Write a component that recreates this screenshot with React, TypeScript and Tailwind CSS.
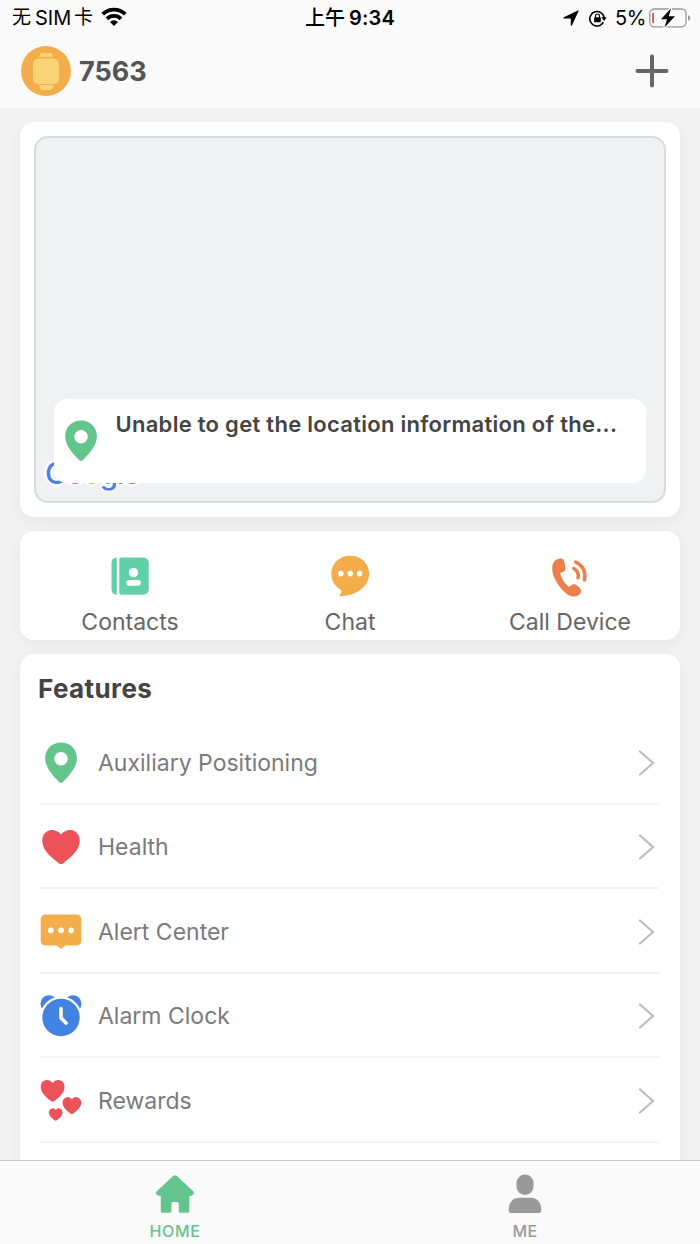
import type { ReactNode } from 'react';

function WatchAvatar() {
  return (
    <svg className="w-[50px] h-[50px]" viewBox="0 0 50 50">
      <circle cx="25" cy="25" r="25" fill="#f3ae4b" />
      <path d="M20.5 7h9q1 0 1.500 1l1.500 3h-14.500l1.500-3q.500-1 1-1z" fill="#f8d477" />
      <path d="M20.500 44h9q1 0 1.500-1l1.500-4h-14.500l1.500 4q.500 1 1 1z" fill="#f8d477" />
      <rect x="12" y="12.500" width="26" height="25.500" rx="5.500" fill="#f8d477" />
    </svg>
  );
}

function WifiIcon() {
  return (
    <svg className="w-[26px] h-[19px]" viewBox="0 0 26 19">
      <g fill="none" stroke="#000" strokeWidth="3.800">
        <path d="M1.700 7.200a16 16 0 0 1 22.600 0" />
        <path d="M6 11.800a9.900 9.900 0 0 1 14 0" />
      </g>
      <path d="M9 14.900a5.700 5.700 0 0 1 8 0L13 18.900z" fill="#000" />
    </svg>
  );
}

function LocationArrow() {
  return (
    <svg className="w-[16px] h-[16px]" viewBox="0 0 16 16">
      <path d="M15 .4Q16 .2 15.500 1.300L9 15.200q-.9 1.300-1.200-.2V8.500H1Q-.5 8.100 .8 7.200z" />
    </svg>
  );
}

function RotationLock() {
  return (
    <svg className="w-[18px] h-[17px]" viewBox="0 0 18 17">
      <path d="M12 14.800A7.200 7.200 0 1 1 15.200 8" fill="none" stroke="#000" strokeWidth="1.600" />
      <path d="M12.300 7.300h5.500l-2.700 3.600z" />
      <path d="M14.300 12.200a7 7 0 0 1-2.500 2.600" fill="none" stroke="#000" strokeWidth="1.600" />
      <rect x="5.200" y="7.200" width="6.600" height="5" rx=".8" />
      <path d="M6.500 7.500V6a2 2 0 0 1 4 0v1.500" fill="none" stroke="#000" strokeWidth="1.200" />
    </svg>
  );
}

function Battery() {
  return (
    <svg className="w-[42px] h-[20px]" viewBox="0 0 42 20">
      <rect x=".8" y="1" width="36.200" height="17.800" rx="4.500" fill="none" stroke="#999" strokeWidth="1.300" />
      <path d="M39 7q2.300 1 2.300 3T39 13z" fill="#999" />
      <rect x="3.200" y="4.800" width="1.800" height="10.500" rx=".8" fill="#ec4b40" />
      <path d="M22 .2L12 11.200h6L15.500 19.500 26 8.300h-6.200z" fill="#000" stroke="#fafafa" strokeWidth="2.500" paintOrder="stroke" strokeLinejoin="round" />
    </svg>
  );
}

function PinIcon() {
  return (
    <svg className="w-[42px] h-[42px]" viewBox="0 0 42 42">
      <path
        fillRule="evenodd"
        d="M21 .6C12 .6 5.200 7.300 5.200 16.500c0 7.500 5.300 14.700 13.800 23.600q2 1.700 4 0C31.500 31.200 36.900 24 36.900 16.500 36.900 7.300 30 .6 21 .6zm0 9.400a6.800 6.800 0 1 1 0 13.600 6.800 6.800 0 0 1 0-13.600z"
        fill="#63c48c"
      />
    </svg>
  );
}

const HEART = 'M19 5C15.500 1 11.800.2 9.600.5 4 1 .3 5.200.3 11.200c0 10 9.200 16.500 16.700 22.700q2 1.300 4 0C28.500 27.700 37.700 21.200 37.700 11.200 37.700 5.200 34 1 28.400.5 26.200.2 22.500 1 19 5z';

function HeartIcon() {
  return (
    <svg className="w-[42px] h-[42px]" viewBox="0 0 42 42">
      <path transform="translate(2 3.500)" d={HEART} fill="#ec525a" />
    </svg>
  );
}

function HeartsIcon() {
  return (
    <svg className="w-[42px] h-[42px]" viewBox="0 0 42 42" fill="#ec525a">
      <path transform="translate(.6 -.2) scale(.635)" d={HEART} />
      <path transform="translate(22.400 16.900) scale(.5)" d={HEART} />
      <path transform="translate(8.800 28.200) scale(.365)" d={HEART} />
    </svg>
  );
}

function AlertIcon() {
  return (
    <svg className="w-[42px] h-[42px]" viewBox="0 0 42 42">
      <path d="M6 3.500h30q5.300 0 5.300 5.300v20.400q0 5.300-5.300 5.300H25.500l-3.200 2.600q-1.300 1-2.600 0L16.500 34.500H6Q.7 34.500.7 29.200V8.800Q.7 3.500 6 3.500z" fill="#f3ae4b" />
      <g fill="#fff">
        <circle cx="10.800" cy="19.400" r="2.800" />
        <circle cx="21" cy="19.400" r="2.800" />
        <circle cx="31.200" cy="19.400" r="2.800" />
      </g>
    </svg>
  );
}

function AlarmIcon() {
  return (
    <svg className="w-[42px] h-[42px]" viewBox="0 0 42 42">
      <circle cx="9" cy="8.800" r="8.500" fill="#4282e0" />
      <circle cx="33" cy="8.800" r="8.500" fill="#4282e0" />
      <circle cx="21" cy="22.500" r="21" fill="#fff" />
      <circle cx="21" cy="22.500" r="18.700" fill="#4282e0" />
      <path d="M21 13.500v9.500l5 5" fill="none" stroke="#fff" strokeWidth="3.600" strokeLinecap="round" strokeLinejoin="round" />
    </svg>
  );
}

function ContactsIcon() {
  return (
    <svg className="w-[42px] h-[42px]" viewBox="0 0 42 42">
      <path d="M7.800 2.500v37.200Q2.500 39.500 2.500 34V8q0-5.300 5.300-5.500z" fill="#62d0a6" />
      <path d="M12.500 2.500H34q5.700 0 5.700 5.700V34q0 5.700-5.700 5.700H12.500q-2.300 0-2.300-2.300V4.800q0-2.300 2.300-2.300z" fill="#62d0a6" />
      <circle cx="24.500" cy="17.600" r="4.700" fill="#fff" />
      <rect x="17.200" y="25" width="14.700" height="5.700" rx="2.850" fill="#fff" />
    </svg>
  );
}

function ChatIcon() {
  return (
    <svg className="w-[42px] h-[42px]" viewBox="0 0 42 42">
      <path d="M21.300.8c10.700 0 18.800 7.500 18.800 17.800C40.100 31.500 28 40.500 11.500 41.300q-1.600-.2-.7-1.600 2.800-3.500 1-4.700C5.500 30.800 2.300 26 2.300 18.600 2.300 8.300 10.600.8 21.300.8z" fill="#f3ae4b" />
      <g fill="#fff">
        <circle cx="11.800" cy="18.600" r="2.800" />
        <circle cx="21.200" cy="18.600" r="2.800" />
        <circle cx="30.600" cy="18.600" r="2.800" />
      </g>
    </svg>
  );
}

function PhoneIcon() {
  return (
    <svg className="w-[42px] h-[42px]" viewBox="0 0 42 42">
      <path
        d="M7.600 4.600C10.500 3.200 13.800 3 14.900 5.500c1 2.500 1.600 6.500 1.300 9-.5 3-4.300 2.200-5.100 4C12.500 23 15.300 28 19.300 31.500c1.700 1.500 3.500-3.100 6.200-2.300 2.700.9 5.500 3.300 6.300 5.500 1 2.500-.6 4.500-3.200 6-3.500 1.600-8 .9-12.800-3.500C9 31 3.500 21.500 3.200 14.500 3 9.500 4.500 6.200 7.600 4.600z"
        fill="#ee7f4d"
      />
      <g fill="none" stroke="#ee7f4d" strokeWidth="3.500" strokeLinecap="round">
        <path d="M24.800 13.500q5.700 3.500 4.200 9.300" />
        <path d="M26.600 7q11.300 5.500 8.900 18" />
      </g>
    </svg>
  );
}

function HomeIcon() {
  return (
    <svg className="w-[40px] h-[40px]" viewBox="0 0 40 40">
      <path d="M18.500 1.800q1.500-1.300 3 0L38 17q1.800 2.200 0 3.800-1.500 1.200-3.700 1.200v15.200q0 1.500-1.500 1.500h-7.500q-1.500 0-1.500-1.500V29.500q0-1.500-1.500-1.500h-4.400q-1.500 0-1.500 1.500v7.700q0 1.500-1.500 1.500H7.300q-1.500 0-1.500-1.500V22Q3.500 22 2 20.800 0 19 2 17z" fill="#63c48c" />
    </svg>
  );
}

function PersonIcon() {
  return (
    <svg className="w-[40px] h-[40px]" viewBox="0 0 40 40" fill="#999">
      <rect x="11.500" y=".6" width="17" height="20.500" rx="8.500" />
      <path d="M14.500 23.700h11c6.500 0 10.800 4.500 10.800 12.500q0 2.800-2.800 2.800h-27q-2.800 0-2.800-2.800c0-8 4.300-12.500 10.800-12.500z" />
    </svg>
  );
}

const actions: { label: string; icon: ReactNode }[] = [
  { label: 'Contacts', icon: <ContactsIcon /> },
  { label: 'Chat', icon: <ChatIcon /> },
  { label: 'Call Device', icon: <PhoneIcon /> },
];

const features: { label: string; icon: ReactNode }[] = [
  { label: 'Auxiliary Positioning', icon: <PinIcon /> },
  { label: 'Health', icon: <HeartIcon /> },
  { label: 'Alert Center', icon: <AlertIcon /> },
  { label: 'Alarm Clock', icon: <AlarmIcon /> },
  { label: 'Rewards', icon: <HeartsIcon /> },
];

export default function App() {
  return (
    <div className="flex h-[1244px] w-[700px] flex-col overflow-hidden bg-[#f2f2f2] font-[Inter,'Noto_Sans_CJK_SC',sans-serif]">
      <header className="h-[108px] shrink-0 bg-[#fafafa]">
        <div className="grid h-9 grid-cols-3 items-center pl-3 pr-[9px] text-[20px] leading-9 text-black">
          <div className="flex items-center">
            <span className="w-[23px] text-[19px]">无</span>
            <span className="w-[39px]">SIM</span>
            <span className="w-[28px] text-[19px]">卡</span>
            <div className="-mt-1 -ml-px"><WifiIcon /></div>
          </div>
          <div className="flex items-center justify-center gap-[4px] pr-[3px] font-medium">
            <span className="text-[20px]">上午</span>
            <span className="font-semibold tracking-[0.2px]">9:34</span>
          </div>
          <div className="flex items-center justify-end">
            <LocationArrow />
            <div className="ml-[10px] mr-[8px]"><RotationLock /></div>
            <span className="w-[34px] tracking-tight">5%</span>
            <div className="-mt-px"><Battery /></div>
          </div>
        </div>
        <div className="flex h-[70px] items-center pl-[21px] pr-[31px]">
          <WatchAvatar />
          <span className="ml-2 mt-[2px] text-[27px] font-bold text-[#555]">7563</span>
          <svg className="ml-auto h-[34px] w-[34px]" viewBox="0 0 34 34">
            <path d="M17 2.500v29M2.500 17h29" stroke="#666" strokeWidth="4" strokeLinecap="round" />
          </svg>
        </div>
      </header>

      <main className="flex min-h-0 flex-1 flex-col gap-[14px] overflow-hidden px-5 pt-[14px]">
        <section className="h-[395px] shrink-0 rounded-[14px] bg-white px-[14px] pt-[14px] shadow-[0_4px_14px_rgba(0,0,0,0.05)]">
          <div className="relative flex h-[367px] flex-col justify-end overflow-hidden rounded-[14px] border-2 border-[#dadbdc] bg-[#f0f1f3] px-[18px] pb-[18px]">
            <div className="absolute bottom-[9px] left-[9px] text-[30px] font-medium leading-[38px] tracking-[-1.4px] [text-shadow:0_0_2px_#fff,2px_0_2px_#fff,-2px_0_2px_#fff,0_2px_2px_#fff,0_-2px_2px_#fff]">
              <span className="text-[#4a80ee]">G</span>
              <span className="text-[#dc6459]">o</span>
              <span className="text-[#eebd42]">o</span>
              <span className="text-[#4a80ee]">g</span>
              <span className="text-[#58a764]">l</span>
              <span className="text-[#dc6459]">e</span>
            </div>
            <div className="relative flex h-[84px] items-center rounded-[13px] bg-white pl-[6px]">
              <PinIcon />
              <p className="mb-[34px] ml-[13.5px] whitespace-nowrap text-[22px] font-semibold leading-[30px] tracking-[0.28px] text-[#444]">
                Unable to get the location information of the...
              </p>
            </div>
          </div>
        </section>

        <section className="grid h-[109px] shrink-0 grid-cols-3 rounded-[14px] bg-white shadow-[0_4px_14px_rgba(0,0,0,0.05)]">
          {actions.map((a) => (
            <div key={a.label} className="flex flex-col items-center pt-6">
              {a.icon}
              <span className="mt-[9px] text-[23px] leading-8 text-[#666]">{a.label}</span>
            </div>
          ))}
        </section>

        <section className="h-[520px] shrink-0 rounded-t-[14px] bg-white px-[18px] shadow-[0_4px_14px_rgba(0,0,0,0.05)]">
          <h2 className="flex h-[66px] items-center pt-[2px] text-[26px] font-bold tracking-[0.4px] text-[#444]">Features</h2>
          <ul>
            {features.map((f) => (
              <li key={f.label} className="ml-[2px] mr-[3px] flex h-[84.5px] items-center border-b-2 border-[#f4f4f4] pt-[3px]">
                {f.icon}
                <span className="ml-[16px] text-[23px] text-[#7a7a7a]">{f.label}</span>
                <svg className="ml-auto mr-[4px] h-[26px] w-[17px]" viewBox="0 0 17 26">
                  <path d="M2 1.500L15 13 2 24.500" fill="none" stroke="#bdbdbd" strokeWidth="2.200" strokeLinecap="round" />
                </svg>
              </li>
            ))}
          </ul>
        </section>
      </main>

      <nav className="grid h-[84px] shrink-0 grid-cols-2 border-t border-[#c9c9c9] bg-[#fafafa] text-[16px] leading-5">
        <div className="flex flex-col items-center pt-[13px] text-[#63c48c]">
          <HomeIcon />
          <span className="mt-[7px] font-medium tracking-[0.6px]">HOME</span>
        </div>
        <div className="flex flex-col items-center pt-[13px] text-[#999]">
          <PersonIcon />
          <span className="mt-[7px] font-medium tracking-[0.3px]">ME</span>
        </div>
      </nav>
    </div>
  );
}
